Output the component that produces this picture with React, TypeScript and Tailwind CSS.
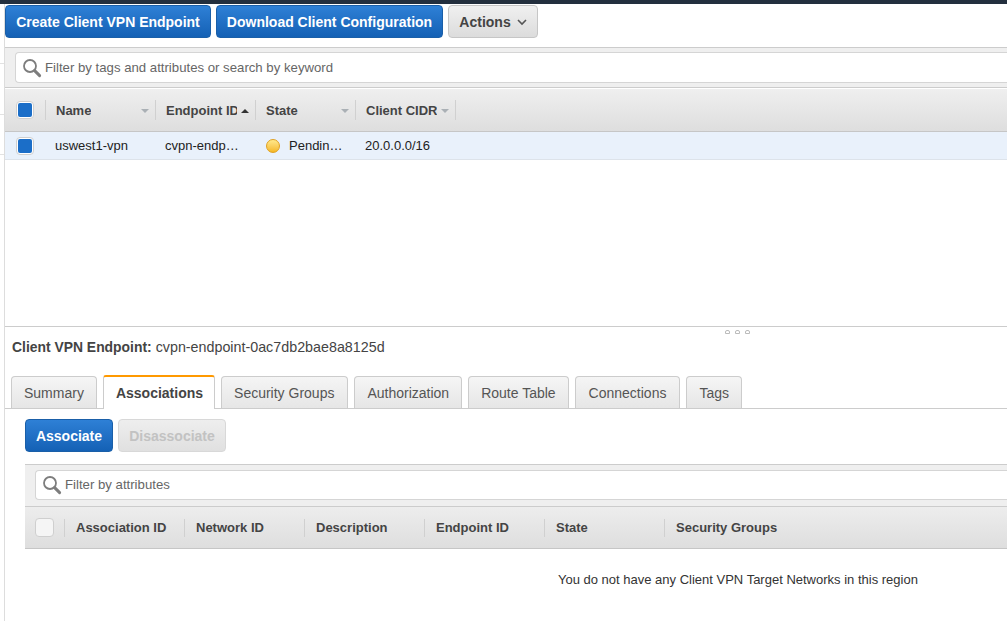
import type { ReactNode } from "react";

const blueBtn =
  "h-[33px] shrink-0 whitespace-nowrap rounded-[4px] border border-[#1a5fa8] bg-gradient-to-b from-[#2e80d6] to-[#1461b5] pt-px text-[14px] font-bold text-white";

function SearchIcon() {
  return (
    <svg width="20" height="20" viewBox="0 0 20 20" fill="none" className="mr-[3px] shrink-0">
      <circle cx="8" cy="8" r="6" stroke="#7d7d7d" strokeWidth="1.8" />
      <path d="M12.6 12.6l5 5" stroke="#7d7d7d" strokeWidth="3" strokeLinecap="round" />
    </svg>
  );
}

function SortCaret() {
  return <span className="absolute right-[6px] top-[9px] border-x-[4px] border-t-[4px] border-x-transparent border-t-[#aab0b5]" />;
}

function Checkbox({ checked }: { checked?: boolean }) {
  return (
    <span className={`flex items-center justify-center rounded-[4px] border border-[#cfcfcf] ${checked ? "h-[18px] w-[18px] bg-white" : "h-[19px] w-[19px] bg-[#f5f5f5]"}`}>
      {checked && <span className="h-[14px] w-[14px] rounded-[2px] bg-[#1b6ec8]" />}
    </span>
  );
}

function MainHead({ label, width, children }: { label: string; width: number; children?: ReactNode }) {
  return (
    <div style={{ width }} className="relative flex h-[20px] shrink-0 items-center border-r border-[#d0d0d0] pl-[10px] pt-[2px] text-[13px] font-bold text-[#444]">
      <span className="max-w-[71px] overflow-hidden whitespace-nowrap">{label}</span>
      {children}
    </div>
  );
}

function SubHead({ label, width }: { label: string; width: number }) {
  return (
    <div style={{ width }} className="flex h-[18px] shrink-0 items-center whitespace-nowrap border-r border-[#d0d0d0] pl-[11px] text-[13px] font-bold text-[#444] last:border-r-0">
      {label}
    </div>
  );
}

const tabs = ["Summary", "Associations", "Security Groups", "Authorization", "Route Table", "Connections", "Tags"];

export default function App() {
  return (
    <div className="relative h-[621px] w-[1007px] overflow-hidden bg-white font-['Liberation_Sans',Arial,sans-serif] text-[#333]">
      <div className="h-[4px] bg-[#232f3e]" />
      {/* bits of the nav behind the page, peeking out at the left */}
      <div className="absolute left-0 top-[63px] h-px w-[4px] bg-[#e2e2e2]" />
      <div className="absolute left-0 top-[114px] h-px w-[4px] bg-[#e2e2e2]" />
      <div className="absolute left-0 top-[154px] h-px w-[4px] bg-[#e2e2e2]" />

      <div className="ml-[4px] flex h-[617px] flex-col border-l border-[#ddd]">
        {/* toolbar */}
        <div className="flex h-[43px] shrink-0 gap-[5px] pt-[1px]">
          <button className={`${blueBtn} w-[206px]`}>Create Client VPN Endpoint</button>
          <button className={`${blueBtn} w-[227px]`}>Download Client Configuration</button>
          <button className="flex h-[33px] w-[90px] shrink-0 items-center justify-center gap-[6px] rounded-[4px] border border-[#c6c6c6] bg-gradient-to-b from-[#f0f0f0] to-[#dcdcdc] pt-px text-[14px] font-bold text-[#444]">
            Actions
            <svg width="10" height="7" viewBox="0 0 10 7" fill="none" stroke="#555" strokeWidth="1.6"><path d="M1 1l4 4 4-4" /></svg>
          </button>
        </div>

        {/* filter band */}
        <div className="h-[41px] shrink-0 border-y border-[#ccc] bg-[#efefef] pl-[10px] pt-[4px]">
          <div className="flex h-[31px] items-center rounded-l-[4px] border border-r-0 border-[#d5d5d5] bg-white pl-[6px] text-[13.2px] text-[#666]">
            <SearchIcon />
            Filter by tags and attributes or search by keyword
          </div>
        </div>

        {/* table header */}
        <div className="flex h-[44px] shrink-0 items-center border-b border-t border-[#c6c6c6] border-t-white bg-gradient-to-b from-[#efefef] to-[#dedede]">
          <div className="flex h-[20px] w-[41px] shrink-0 items-center border-r border-[#d0d0d0] pl-[11px]"><Checkbox checked /></div>
          <MainHead label="Name" width={110}><SortCaret /></MainHead>
          <MainHead label="Endpoint ID" width={100}>
            <span className="absolute right-[6px] top-[9px] border-x-[4px] border-b-[4px] border-x-transparent border-b-[#333]" />
          </MainHead>
          <MainHead label="State" width={100}><SortCaret /></MainHead>
          <MainHead label="Client CIDR" width={100}><SortCaret /></MainHead>
        </div>

        {/* row */}
        <div className="flex h-[28px] shrink-0 items-center border-b border-[#dde3ea] bg-[#e9f1fb] text-[13px] text-[#222]">
          <div className="w-[50px] shrink-0 pl-[11px]"><Checkbox checked /></div>
          <div className="w-[110px] shrink-0">uswest1-vpn</div>
          <div className="w-[101px] shrink-0">cvpn-endp…</div>
          <div className="flex w-[99px] shrink-0 items-center gap-[9px]">
            <span className="h-[14px] w-[14px] rounded-full border border-[#e0a020] bg-gradient-to-b from-[#ffe98a] to-[#f5b81e]" />
            Pendin…
          </div>
          <div>20.0.0.0/16</div>
        </div>

        <div className="h-[166px] shrink-0" />

        {/* details pane */}
        <div className="relative flex flex-1 flex-col border-t border-[#ccc]">
          <div className="absolute left-[720px] top-[3px] flex gap-[5px]">
            <span className="h-[4px] w-[5px] rounded-t-[2px] border border-[#bbb]" />
            <span className="h-[4px] w-[5px] rounded-t-[2px] border border-[#bbb]" />
            <span className="h-[4px] w-[5px] rounded-t-[2px] border border-[#bbb]" />
          </div>
          <div className="whitespace-nowrap pl-[7px] pt-[12px] text-[14.3px] leading-[17px] text-[#444]">
            <span className="text-[13.9px] font-bold">Client VPN Endpoint:</span> cvpn-endpoint-0ac7db2bae8a8125d
          </div>

          <div className="mt-[19px] flex h-[34px] shrink-0 items-end gap-[6px] border-b border-[#ccc] pl-[6px]">
            {tabs.map((t) =>
              t === "Associations" ? (
                <div key={t} className="-mb-px flex h-[34px] items-center rounded-t-[3px] border-x border-t-2 border-x-[#ccc] border-t-[#f90] bg-white pl-[12px] pr-[11px] pt-px text-[14px] font-bold text-[#444]">
                  {t}
                </div>
              ) : (
                <div key={t} className={`flex h-[32px] items-center rounded-t-[4px] border-x border-t border-[#ccc] bg-gradient-to-b from-[#f5f5f5] to-[#e6e6e6] pt-px text-[14px] text-[#555] ${t === "Connections" ? "px-[13px]" : t === "Security Groups" ? "pl-[12px] pr-[13px]" : "px-[12px]"}`}>
                  {t}
                </div>
              ),
            )}
          </div>

          <div className="flex gap-[5px] pl-[20px] pt-[10px]">
            <button className="h-[33px] w-[88px] rounded-[4px] border border-[#1a5fa8] bg-gradient-to-b from-[#2e80d6] to-[#1461b5] pt-px text-[14px] font-bold text-white">Associate</button>
            <button className="h-[33px] w-[108px] rounded-[4px] border border-[#d8d8d8] bg-gradient-to-b from-[#eeeeee] to-[#e0e0e0] pt-px text-[14px] font-bold text-[#c2c2c2]">Disassociate</button>
          </div>

          <div className="ml-[20px] mt-[12px] h-[43px] shrink-0 border-y border-[#ccc] bg-[#efefef] pl-[10px] pt-[5px]">
            <div className="flex h-[30px] items-center rounded-l-[4px] border border-r-0 border-[#d5d5d5] bg-white pl-[6px] text-[13.2px] text-[#666]">
              <SearchIcon />
              Filter by attributes
            </div>
          </div>

          <div className="ml-[20px] flex h-[42px] shrink-0 items-center border-b border-[#c6c6c6] bg-gradient-to-b from-[#ededed] to-[#dedede]">
            <div className="flex h-[18px] w-[40px] shrink-0 items-center border-r border-[#d0d0d0] pl-[10px]"><Checkbox /></div>
            <SubHead label="Association ID" width={120} />
            <SubHead label="Network ID" width={120} />
            <SubHead label="Description" width={120} />
            <SubHead label="Endpoint ID" width={120} />
            <SubHead label="State" width={120} />
            <SubHead label="Security Groups" width={160} />
          </div>

          <div className="whitespace-nowrap pl-[553px] pt-[23px] text-[13px] leading-[16px] text-[#333]">
            You do not have any Client VPN Target Networks in this region
          </div>
        </div>
      </div>
    </div>
  );
}
